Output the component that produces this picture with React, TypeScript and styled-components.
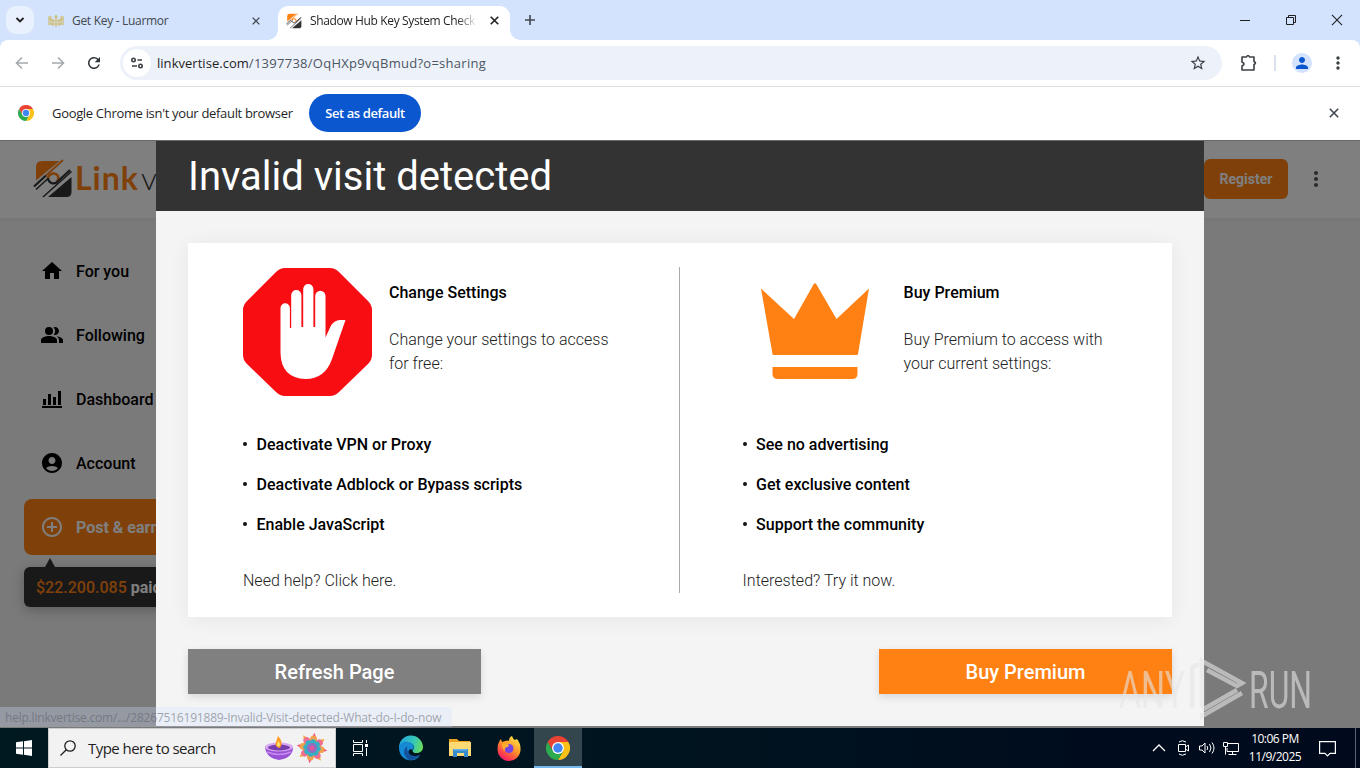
import React, { FC, ReactNode } from 'react';
import styled, { createGlobalStyle, css } from 'styled-components';
import { MdAccountCircle, MdAddCircleOutline, MdHome, MdMoreVert, MdPeopleAlt, MdPerson, MdRefresh, MdStarOutline } from 'react-icons/md';

const systemFont = "'Open Sans', 'Noto Sans', sans-serif";
const orange = '#ff8114';

const GlobalStyle = createGlobalStyle`
    * {
        box-sizing: border-box;
    }
    body {
        margin: 0;
        overflow: hidden;
        font-family: Roboto, sans-serif;
    }
    svg {
        display: block;
        flex: none;
    }
`;

const StyledDesktop = styled.div`
    position: relative;
    display: flex;
    flex-direction: column;
    width: 1360px;
    height: 768px;
    overflow: hidden;
`;

type SystemTextProps = { $size?: number; $spacing?: number; $weight?: number; $color?: string };

const SystemText = styled.span<SystemTextProps>`
    font-family: ${systemFont};
    font-size: ${(props) => props.$size || 12}px;
    font-weight: ${(props) => props.$weight || 400};
    letter-spacing: ${(props) => props.$spacing || 0}px;
    color: ${(props) => props.$color || '#1f1f1f'};
    white-space: nowrap;
`;

const Spacer = styled.span<{ $width: number }>`
    flex: none;
    width: ${(props) => props.$width}px;
`;

/* Tab strip */

const StyledTabStrip = styled.div`
    display: flex;
    height: 40px;
    background: #d3e2fd;
`;

const StyledTabSearch = styled.div`
    display: flex;
    align-items: center;
    justify-content: center;
    width: 28px;
    height: 28px;
    margin: 6px 6px 0;
    border-radius: 10px;
    background: #e9f0fe;
`;

const StyledTab = styled.div<{ $active?: boolean; $width: number }>`
    position: relative;
    display: flex;
    align-items: center;
    width: ${(props) => props.$width}px;
    height: 34px;
    margin-top: 6px;
    padding: 0 8px 5px;
    ${(props) =>
        props.$active &&
        css`
            background: #fff;
            border-radius: 10px 10px 0 0;
            &::before,
            &::after {
                content: '';
                position: absolute;
                bottom: 0;
                width: 10px;
                height: 10px;
            }
            &::before {
                left: -10px;
                background: radial-gradient(circle at 0 0, transparent 9.5px, #fff 10px);
            }
            &::after {
                right: -10px;
                background: radial-gradient(circle at 100% 0, transparent 9.5px, #fff 10px);
            }
        `}
`;

const StyledTabTitle = styled.div<{ $faded?: boolean }>`
    flex: 1;
    margin-left: 8px;
    margin-right: 11px;
    line-height: 18px;
    display: flex;
    ${(props) => props.$faded && 'mask-image: linear-gradient(90deg, #000 87%, transparent 99%);'}
`;

const StyledNewTab = styled.div`
    margin: 14px 0 0 14px;
`;

const StyledWindowButtons = styled.div`
    display: flex;
    gap: 34px;
    margin: 14px 17px 0 auto;
`;

/* Toolbar */

const StyledToolbarBack = styled.div`
    background: #d3e2fd;
`;

const StyledToolbar = styled.div`
    display: flex;
    align-items: center;
    height: 47px;
    padding: 0 12px 1px 14px;
    border-bottom: 1px solid #dde1e6;
    border-radius: 8px 8px 0 0;
    background: #fff;
`;

const StyledNavButtons = styled.div`
    display: flex;
    flex: none;
    gap: 20px;
    width: 106px;
`;

const StyledOmnibox = styled.div`
    display: flex;
    flex: none;
    align-items: center;
    width: 1102px;
    height: 34px;
    padding: 0 15px 0 3px;
    border-radius: 17px;
    background: #edf1fa;
`;

const StyledSiteInfo = styled.div`
    display: flex;
    align-items: center;
    justify-content: center;
    width: 28px;
    height: 28px;
    margin-right: 6px;
    border-radius: 50%;
    background: #fff;
`;

const StyledUrl = styled.div`
    flex: 1;
    line-height: 20px;
`;

const StyledToolbarSeparator = styled.div`
    width: 2px;
    height: 16px;
    margin: 0 16px 0 16px;
    background: #dbe1ec;
`;

const StyledAvatar = styled.div`
    display: flex;
    flex: none;
    align-items: center;
    justify-content: center;
    width: 20px;
    height: 20px;
    margin-right: 16px;
    border-radius: 50%;
    background: #d3e2fd;
    color: #0b57d0;
`;

/* Info bar */

const StyledInfoBar = styled.div`
    display: flex;
    align-items: center;
    height: 53px;
    padding: 0 21px 2px 18px;
    background: #fff;
`;

const StyledInfoText = styled.div`
    display: flex;
    width: 257px;
    margin-left: 18px;
`;

const StyledDefaultButton = styled.div`
    display: flex;
    align-items: center;
    justify-content: center;
    width: 112px;
    height: 38px;
    margin-right: auto;
    border-radius: 19px;
    background: #0b57d0;
`;

/* Page below the dialog */

const StyledPage = styled.div`
    position: relative;
    height: 588px;
    overflow: hidden;
    background: #f4f4f4;
`;

const StyledPageHeader = styled.div`
    display: flex;
    align-items: center;
    height: 78px;
    padding: 0 32px 2px 33px;
    border-top: 1px solid #cfcfcf;
    background: #fff;
    box-shadow: 0 1px 4px rgba(0, 0, 0, 0.06);
`;

const StyledBrand = styled.div`
    display: flex;
    align-items: center;
    margin-left: 2px;
    padding-bottom: 2px;
    font-family: 'Lato', sans-serif;
    font-size: 32px;
    font-weight: 700;
    letter-spacing: 1px;
    color: ${orange};
`;

const StyledBrandThin = styled.span`
    margin-left: 2px;
    font-weight: 300;
    color: #333;
`;

const StyledRegister = styled.div`
    display: flex;
    align-items: center;
    justify-content: center;
    width: 84px;
    height: 40px;
    margin-left: auto;
    margin-right: 16px;
    border-radius: 6px;
    background: ${orange};
    color: #fff;
    font-size: 14px;
    font-weight: 700;
`;

const StyledSidebar = styled.div`
    display: flex;
    flex-direction: column;
    width: 248px;
    padding: 21px 24px 0;
`;

const StyledMenuItem = styled.div<{ $primary?: boolean }>`
    display: flex;
    align-items: center;
    gap: 12px;
    height: ${(props) => (props.$primary ? 56 : 64)}px;
    margin-top: ${(props) => (props.$primary ? 4 : 0)}px;
    padding-left: 16px;
    border-radius: 8px;
    background: ${(props) => (props.$primary ? orange : 'none')};
    color: ${(props) => (props.$primary ? '#fff' : '#000')};
    font-size: 16px;
    font-weight: ${(props) => (props.$primary ? 700 : 500)};
    white-space: nowrap;
`;

const StyledPaidArrow = styled.div`
    width: 0;
    margin: 3px 0 0 21px;
    border: 5.5px solid transparent;
    border-top: none;
    border-bottom: 9px solid #333;
`;

const StyledPaid = styled.div`
    height: 40px;
    padding-left: 12px;
    border-radius: 6px;
    background: #333;
    box-shadow: 0 3px 12px rgba(0, 0, 0, 0.25);
    color: #fff;
    font-size: 16px;
    font-weight: 700;
    line-height: 41px;
    white-space: nowrap;
`;

const StyledPaidAmount = styled.span`
    color: ${orange};
    font-weight: 500;
`;

/* Dialog */

const StyledOverlay = styled.div`
    position: absolute;
    inset: 0;
    display: flex;
    justify-content: center;
    padding: 1px 0 2px;
    background: rgba(0, 0, 0, 0.5);
`;

const StyledDialog = styled.div`
    display: flex;
    flex-direction: column;
    width: 1048px;
    background: #f4f4f4;
`;

const StyledDialogTitle = styled.div`
    height: 70px;
    padding-left: 32px;
    background: #333;
    color: #fff;
    font-size: 40px;
    line-height: 72px;
`;

const StyledCard = styled.div`
    display: flex;
    height: 374px;
    margin: 32px 32px 0;
    padding: 24px 0;
    background: #fff;
    box-shadow: 0 2px 20px rgba(0, 0, 0, 0.06);
`;

const StyledOption = styled.div<{ $left: number; $width?: number }>`
    width: ${(props) => (props.$width ? `${props.$width}px` : 'auto')};
    padding-left: ${(props) => props.$left}px;
`;

const StyledCardDivider = styled.div`
    width: 1px;
    background: #aaa;
`;

const StyledOptionTop = styled.div<{ $gap: number }>`
    display: flex;
    gap: ${(props) => props.$gap}px;
    height: 157px;
`;

const StyledOptionHeading = styled.div`
    margin-top: 14px;
    font-size: 16px;
    font-weight: 500;
    line-height: 24px;
    color: #000;
`;

const StyledOptionText = styled.div`
    margin-top: 23px;
    font-size: 16px;
    font-weight: 300;
    line-height: 24px;
    color: #222;
    white-space: pre;
`;

const StyledBullets = styled.ul`
    margin: 0;
    padding: 0;
    list-style: none;
`;

const StyledBullet = styled.li`
    display: flex;
    align-items: center;
    gap: 9.5px;
    height: 40px;
    font-size: 16px;
    font-weight: 500;
    color: #000;
    &::before {
        content: '';
        width: 4px;
        height: 4px;
        border-radius: 50%;
        background: #111;
    }
`;

const StyledOptionLink = styled.div`
    margin-top: 25px;
    font-size: 16px;
    font-weight: 300;
    line-height: 24px;
    color: #222;
`;

const StyledActions = styled.div`
    display: flex;
    justify-content: space-between;
    padding: 32px 32px 0;
`;

const StyledAction = styled.div<{ $color: string }>`
    width: 293px;
    height: 45px;
    background: ${(props) => props.$color};
    box-shadow: 0 3px 8px rgba(0, 0, 0, 0.12);
    color: #fff;
    font-size: 20px;
    font-weight: 500;
    line-height: 47px;
    text-align: center;
`;

const StyledStatus = styled.div`
    position: absolute;
    left: 0;
    bottom: 1px;
    display: flex;
    align-items: center;
    width: 452px;
    height: 20px;
    padding-left: 5px;
    border-radius: 0 4px 0 0;
    background: rgba(211, 226, 253, 0.3);
`;

const StyledWatermark = styled.svg`
    position: absolute;
    left: 1110px;
    top: 650px;
`;

/* Taskbar */

const StyledTaskbar = styled.div`
    display: flex;
    height: 40px;
    background: linear-gradient(90deg, #001820, #00141f 50%, #000c1e 80%, #000a1c);
`;

const StyledTaskButton = styled.div<{ $active?: boolean; $width?: number }>`
    display: flex;
    align-items: center;
    justify-content: center;
    width: ${(props) => props.$width || 49}px;
    height: 40px;
    ${(props) => props.$active && 'background: #33454d; border-bottom: 2px solid #76b9ed; padding-top: 2px;'}
`;

const StyledSearch = styled.div`
    display: flex;
    align-items: center;
    width: 288px;
    height: 40px;
    padding: 0 7px 0 11px;
    border: 1px solid #cdcdcd;
    background: #f2f2f2;
`;

const StyledSearchText = styled.div`
    flex: 1;
    margin-left: 12px;
`;

const StyledTray = styled.div`
    display: flex;
    align-items: center;
    margin-left: auto;
`;

const StyledClock = styled.div`
    display: flex;
    flex-direction: column;
    align-items: center;
    width: 64px;
    line-height: 18px;
`;

const StyledShowDesktop = styled.div`
    width: 5px;
    height: 40px;
    margin-left: 19px;
    border-left: 1px solid #5b6473;
`;

type IconProps = { width: number; height: number; box?: string; stroke?: string; weight?: number; children: ReactNode };

const LineIcon: FC<IconProps> = (props) => (
    <svg
        width={props.width}
        height={props.height}
        viewBox={props.box || `0 0 ${props.width} ${props.height}`}
        fill="none"
        stroke={props.stroke || '#1f1f1f'}
        strokeWidth={props.weight || 1}
    >
        {props.children}
    </svg>
);

const CloseIcon: FC<{ size: number; color?: string; weight?: number }> = (props) => (
    <LineIcon width={props.size} height={props.size} box="0 0 10 10" stroke={props.color} weight={props.weight || 1.6}>
        <path d="M.8.8l8.4 8.4M9.2.8L.8 9.2" />
    </LineIcon>
);

const ChromeLogo: FC<{ size: number }> = (props) => (
    <svg width={props.size} height={props.size} viewBox="0 0 48 48">
        <path d="M24 12h20.8A24 24 0 0 0 3.2 12l10.4 18z" fill="#ea4335" />
        <path d="M34.4 30L24 48A24 24 0 0 0 44.8 12H24z" fill="#fbc116" />
        <path d="M13.6 30L3.2 12A24 24 0 0 0 24 48l10.4-18z" fill="#2da94f" />
        <circle cx="24" cy="24" r="12" fill="#fff" />
        <circle cx="24" cy="24" r="9.5" fill="#4285f4" />
    </svg>
);

const LinkvertiseLogo: FC<{ size: number }> = (props) => (
    <svg width={props.size} height={props.size} viewBox="0 0 38 40">
        <path d="M2 21.500V8q0-6 6-6h17.500z" fill={orange} />
        <path d="M37.500 18v15q0 5-5 5H14z" fill="#333" />
        <path d="M0 27.500L12 16.500" stroke="#333" strokeWidth="2.200" />
        <path d="M12 16.500L29 1" stroke={orange} strokeWidth="1.800" />
        <path d="M2 30.500L14 19.500M9 38L37.500 12.500" stroke="#333" strokeWidth="1.600" />
        <path d="M14 19a5.500 5.500 0 0 1 10-2q1 3-1 5.500" fill="none" stroke={orange} strokeWidth="2.600" />
        <path d="M14 19a5.500 5.500 0 0 0 8.500 4.500L36 11" fill="none" stroke="#333" strokeWidth="2.200" />
    </svg>
);

const LuarmorIcon: FC = () => (
    <svg width="16" height="16" viewBox="0 0 16 16" fill="none" stroke="#cfbe72">
        <path d="M1 3v9M3 3v9M5 6v7M8 2v12M11 6v7M13 3v9M15 3v9" strokeWidth="1.200" />
        <path d="M1 5.5l4 2M15 5.5l-4 2M5 8h6M2 11h12" strokeWidth="1.200" />
        <circle cx="8" cy="4" r="1.200" />
    </svg>
);

const StopHand: FC = () => (
    <svg width="129" height="129" viewBox="0 0 129 129">
        <path
            d="M42 0H87Q92 0 96 4L125 33Q129 37 129 42V87Q129 92 125 96L96 124Q92 128 87 128H42Q37 128 33 124L4 96Q0 92 0 87V42Q0 37 4 33L33 4Q37 0 42 0Z"
            fill="#f70d12"
        />
        <path
            d="M37.500 85V40a4.700 4.700 0 0 1 9.400 0V60h1.300V27a5 5 0 0 1 10.200 0V59h1.800V21a5 5 0 0 1 10.200 0V59h1.800V28a5 5 0 0 1 10.300 0V69.500l5-11Q91 52 97 52h5.500L89 91Q82 111 62.500 111 38 110 37.500 85Z"
            fill="#fff"
        />
    </svg>
);

const Crown: FC = () => (
    <svg width="108" height="98" viewBox="0 0 108 98" fill={orange}>
        <path d="M0 5.500L33 36 52.500 1.500Q54-1 55.500 1.500L75.500 36 108 5.500 97 71Q96.800 72 96 72H12.500Q11.700 72 11.500 71z" />
        <path d="M11.500 84H96.500V91Q96.500 96 91 96H17Q11.500 96 11.500 91z" />
    </svg>
);

const BarChartIcon: FC = () => (
    <svg width="24" height="24" viewBox="0 0 24 24">
        <path d="M2 19h20v2H2zM3 12h3v6H3zM8 7h3v11H8zM13 10h3v8h-3zM18 4h3v14h-3z" />
    </svg>
);

const EdgeLogo: FC = () => (
    <svg width="26" height="26" viewBox="0 0 26 26">
        <defs>
            <linearGradient id="edgeTop" x1="0" y1="0.4" x2="1" y2="0.6">
                <stop offset="0" stopColor="#22a6dc" />
                <stop offset="0.6" stopColor="#36c8b5" />
                <stop offset="1" stopColor="#6bdc58" />
            </linearGradient>
        </defs>
        <path d="M1 13A12 12 0 0 1 25 12c0 4-3 6-7 6-3 0-4-2-3-3 3-4-1-7-5-7-5 0-8 3-9 5z" fill="url(#edgeTop)" />
        <path d="M1 13c0-4 4-7 9-6 5 0 7 5 5 8-2-2-6 0-4 4 2 3 8 3 11 1-3 5-8 6-12 5C5 24 1 19 1 13z" fill="#1689d4" />
        <path d="M9 11c-5 4-3 11 2 14 5 0 9-2 11-5-5 2-10 1-12-3-1-2-1-4-1-6z" fill="#12539b" />
    </svg>
);

const ExplorerLogo: FC = () => (
    <svg width="22" height="20" viewBox="0 0 22 20">
        <path d="M0 1h8l2 2h11v5H0z" fill="#e7a321" />
        <path d="M0 4h22v14H0z" fill="#ffd973" />
        <path d="M4 11h15v8h-4v-4H8v4H4z" fill="#398ccd" />
        <path d="M5 11h13v1.500H5z" fill="#61b5e8" />
    </svg>
);

const FirefoxLogo: FC = () => (
    <svg width="24" height="25" viewBox="0 0 24 25">
        <defs>
            <linearGradient id="foxFire" x1="0.8" y1="0" x2="0.2" y2="1">
                <stop offset="0" stopColor="#ffe64a" />
                <stop offset="0.45" stopColor="#ff9528" />
                <stop offset="0.8" stopColor="#ff394f" />
                <stop offset="1" stopColor="#e71580" />
            </linearGradient>
        </defs>
        <path d="M4 3l1 3 3-1q3-1 4 0 0-4 3-5 1 3 3 4l2-1q4 5 3.500 11A11.500 11.500 0 0 1 .5 13Q.5 7 4 3z" fill="url(#foxFire)" />
        <circle cx="12" cy="12.500" r="4.500" fill="#7542e5" />
        <path d="M5 8q4-2 7 1l-1 2q-4 0-3 4-3-2-3-7z" fill="#ffad2c" />
    </svg>
);

const DiyaIcon: FC = () => (
    <svg width="30" height="26" viewBox="0 0 30 26">
        <path d="M1 12q14 6 28 0 0 11-14 13Q2 23 1 12z" fill="#9852d6" />
        <ellipse cx="15" cy="12" rx="14" ry="4.500" fill="#d9a8f2" />
        <ellipse cx="15" cy="12.500" rx="11" ry="3" fill="#783cad" />
        <path d="M14 1q6 6 2 12-6-1-4-6z" fill="#ff9b22" />
        <path d="M14.500 6q3 4 0 6-3-2 0-6z" fill="#ffe36a" />
        <path d="M3 17q12 5 24 0" fill="none" stroke="#c88af0" strokeWidth="1.500" />
    </svg>
);

const petals = [0, 45, 90, 135, 180, 225, 270, 315];

const RangoliIcon: FC = () => (
    <svg width="32" height="32" viewBox="-16 -16 32 32">
        {petals.map((angle, index) => (
            <g key={angle} transform={`rotate(${angle + 10})`}>
                <path d="M-4-7L0-15.500 4-7z" fill={index % 2 ? '#f6a83c' : '#ee5f7f'} />
                <circle cy="-9" r="3.400" fill={index % 2 ? '#ef6e91' : '#f4a14b'} />
            </g>
        ))}
        {petals.map((angle) => (
            <circle key={angle} cy="-6" r="2.800" fill="#35aec2" transform={`rotate(${angle + 10})`} />
        ))}
        <circle r="5" fill="#8c6fc4" />
        <circle r="2.500" fill="#e0559a" />
    </svg>
);

const Browser: FC = () => (
    <>
        <StyledTabStrip>
            <StyledTabSearch>
                <LineIcon width={10} height={8} weight={1.8}>
                    <path d="M1.500 2L5 5.500 8.500 2" />
                </LineIcon>
            </StyledTabSearch>
            <StyledTab $width={238}>
                <LuarmorIcon />
                <StyledTabTitle>
                    <SystemText $color="#41484f" $spacing={-0.3}>
                        Get Key - Luarmor
                    </SystemText>
                </StyledTabTitle>
                <CloseIcon size={8} color="#41484f" />
                <Spacer $width={10} />
            </StyledTab>
            <StyledTab $width={232} $active>
                <LinkvertiseLogo size={16} />
                <StyledTabTitle $faded>
                    <SystemText $spacing={-0.36}>Shadow Hub Key System Check</SystemText>
                </StyledTabTitle>
                <CloseIcon size={9} weight={1.8} />
                <Spacer $width={3} />
            </StyledTab>
            <StyledNewTab>
                <LineIcon width={12} height={12} weight={1.6} stroke="#41484f">
                    <path d="M6 1v10M1 6h10" />
                </LineIcon>
            </StyledNewTab>
            <StyledWindowButtons>
                <LineIcon width={12} height={12}>
                    <path d="M1 6.500h10" />
                </LineIcon>
                <LineIcon width={12} height={12}>
                    <path d="M1.500 3.500h7v7h-7zM3.500 3.500v-2h7v7h-2" />
                </LineIcon>
                <CloseIcon size={12} weight={0.9} />
            </StyledWindowButtons>
        </StyledTabStrip>
        <StyledToolbarBack>
            <StyledToolbar>
                <StyledNavButtons>
                    <LineIcon width={16} height={16} stroke="#a5a9ad" weight={1.6}>
                        <path d="M14 8H3M8 2.500L2.500 8 8 13.500" />
                    </LineIcon>
                    <LineIcon width={16} height={16} stroke="#a5a9ad" weight={1.6}>
                        <path d="M2 8h11M8 2.500L13.500 8 8 13.500" />
                    </LineIcon>
                    <MdRefresh size={18} color="#30353a" style={{ margin: -1 }} />
                </StyledNavButtons>
                <StyledOmnibox>
                    <StyledSiteInfo>
                        <LineIcon width={14} height={12} stroke="#3c4043" weight={1.6}>
                            <circle cx="3.500" cy="3" r="1.700" />
                            <path d="M7.500 3H12M2 9h5" />
                            <circle cx="10.500" cy="9" r="1.700" />
                        </LineIcon>
                    </StyledSiteInfo>
                    <StyledUrl>
                        <SystemText $size={13} $spacing={0.03}>
                            linkvertise.com
                        </SystemText>
                        <SystemText $size={13} $spacing={0.27} $color="#4c5663">
                            /1397738/OqHXp9vqBmud?o=sharing
                        </SystemText>
                    </StyledUrl>
                    <MdStarOutline size={18} color="#3c4043" />
                </StyledOmnibox>
                <Spacer $width={18} />
                <LineIcon width={18} height={18} stroke="#3c4043" weight={1.6}>
                    <path d="M2 3h4.500Q8 0 9.500 3H14v4.500q3 1.500 0 3V16H2v-4q4-2 0-4z" strokeLinejoin="round" />
                </LineIcon>
                <StyledToolbarSeparator />
                <StyledAvatar>
                    <MdPerson size={18} />
                </StyledAvatar>
                <MdMoreVert size={20} color="#3c4043" />
            </StyledToolbar>
        </StyledToolbarBack>
        <StyledInfoBar>
            <ChromeLogo size={16} />
            <StyledInfoText>
                <SystemText $size={13} $spacing={-0.32}>
                    Google Chrome isn't your default browser
                </SystemText>
            </StyledInfoText>
            <StyledDefaultButton>
                <SystemText $size={13} $weight={600} $spacing={-0.4} $color="#fff">
                    Set as default
                </SystemText>
            </StyledDefaultButton>
            <CloseIcon size={10} color="#41484f" />
        </StyledInfoBar>
    </>
);

type OptionProps = {
    left: number;
    width?: number;
    picture: ReactNode;
    gap: number;
    heading: string;
    text: string;
    bullets: string[];
    link: string;
};

const Option: FC<OptionProps> = (props) => (
    <StyledOption $left={props.left} $width={props.width}>
        <StyledOptionTop $gap={props.gap}>
            {props.picture}
            <div>
                <StyledOptionHeading>{props.heading}</StyledOptionHeading>
                <StyledOptionText>{props.text}</StyledOptionText>
            </div>
        </StyledOptionTop>
        <StyledBullets>
            {props.bullets.map((bullet) => (
                <StyledBullet key={bullet}>{bullet}</StyledBullet>
            ))}
        </StyledBullets>
        <StyledOptionLink>{props.link}</StyledOptionLink>
    </StyledOption>
);

const StyledHandBox = styled.div`
    padding-top: 1px;
`;

const StyledCrownBox = styled.div`
    padding: 16px 0 0 18px;
`;

const Dialog: FC = () => (
    <StyledDialog>
        <StyledDialogTitle>Invalid visit detected</StyledDialogTitle>
        <StyledCard>
            <Option
                left={55}
                width={491}
                picture={
                    <StyledHandBox>
                        <StopHand />
                    </StyledHandBox>
                }
                gap={17}
                heading="Change Settings"
                text={'Change your settings to access\nfor free:'}
                bullets={['Deactivate VPN or Proxy', 'Deactivate Adblock or Bypass scripts', 'Enable JavaScript']}
                link="Need help? Click here."
            />
            <StyledCardDivider />
            <Option
                left={62.6}
                picture={
                    <StyledCrownBox>
                        <Crown />
                    </StyledCrownBox>
                }
                gap={35}
                heading="Buy Premium"
                text={'Buy Premium to access with\nyour current settings:'}
                bullets={['See no advertising', 'Get exclusive content', 'Support the community']}
                link="Interested? Try it now."
            />
        </StyledCard>
        <StyledActions>
            <StyledAction $color="#808080">Refresh Page</StyledAction>
            <StyledAction $color={orange}>Buy Premium</StyledAction>
        </StyledActions>
    </StyledDialog>
);

const Page: FC = () => (
    <StyledPage>
        <StyledPageHeader>
            <LinkvertiseLogo size={40} />
            <StyledBrand>
                Link<StyledBrandThin>v</StyledBrandThin>
            </StyledBrand>
            <StyledRegister>Register</StyledRegister>
            <MdMoreVert size={24} color="#555" />
        </StyledPageHeader>
        <StyledSidebar>
            <StyledMenuItem>
                <MdHome size={24} />
                For you
            </StyledMenuItem>
            <StyledMenuItem>
                <MdPeopleAlt size={24} />
                Following
            </StyledMenuItem>
            <StyledMenuItem>
                <BarChartIcon />
                Dashboard
            </StyledMenuItem>
            <StyledMenuItem>
                <MdAccountCircle size={24} />
                Account
            </StyledMenuItem>
            <StyledMenuItem $primary>
                <MdAddCircleOutline size={24} />
                Post &amp; earn
            </StyledMenuItem>
            <StyledPaidArrow />
            <StyledPaid>
                <StyledPaidAmount>$22.200.085</StyledPaidAmount> paid
            </StyledPaid>
        </StyledSidebar>
        <StyledOverlay>
            <Dialog />
        </StyledOverlay>
        <StyledStatus>
            <SystemText $size={12} $spacing={-0.2} $color="rgba(80, 88, 100, 0.5)">
                help.linkvertise.com/.../28267516191889-Invalid-Visit-detected-What-do-I-do-now
            </SystemText>
        </StyledStatus>
    </StyledPage>
);

const Taskbar: FC = () => (
    <StyledTaskbar>
        <StyledTaskButton $width={48}>
            <svg width="16" height="16" viewBox="0 0 16 16" fill="#fff">
                <path d="M0 2.300L7 1.300V7.500H0zM8 1.200L16 0V7.500H8zM0 8.500H7V14.700L0 13.700zM8 8.500H16V16L8 14.800z" />
            </svg>
        </StyledTaskButton>
        <StyledSearch>
            <LineIcon width={16} height={16} weight={1.3}>
                <circle cx="10" cy="6" r="5.200" />
                <path d="M6.300 9.700L.5 15.500" />
            </LineIcon>
            <StyledSearchText>
                <SystemText $size={15} $spacing={-0.55}>
                    Type here to search
                </SystemText>
            </StyledSearchText>
            <DiyaIcon />
            <Spacer $width={2} />
            <RangoliIcon />
        </StyledSearch>
        <StyledTaskButton>
            <LineIcon width={17} height={16} stroke="#fff">
                <path d="M1.500 0v2.500h9V0M1.500 4.500h9v7h-9zM1.500 16v-2.500h9V16M14.500 0v3M14.500 8v8" />
                <path d="M13 4h3v3h-3z" fill="#fff" stroke="none" />
            </LineIcon>
        </StyledTaskButton>
        <StyledTaskButton $width={51}>
            <EdgeLogo />
        </StyledTaskButton>
        <StyledTaskButton $width={48}>
            <ExplorerLogo />
        </StyledTaskButton>
        <StyledTaskButton $width={50}>
            <FirefoxLogo />
        </StyledTaskButton>
        <StyledTaskButton $active $width={48}>
            <ChromeLogo size={24} />
        </StyledTaskButton>
        <StyledTray>
            <LineIcon width={24} height={16} stroke="#fff" weight={1.3}>
                <path d="M6 11l6-6 6 6" />
            </LineIcon>
            <LineIcon width={24} height={16} stroke="#fff">
                <path d="M7.500 4.500h7v7h-7zM14.500 7l3-2v6l-3-2M8 2q3-2.500 7 0M8 14q3 2.500 7 0" />
            </LineIcon>
            <LineIcon width={24} height={16} stroke="#fff">
                <path d="M4.500 6H7l3-3v10l-3-3H4.500zM12 6q1.500 2 0 4M14.500 4q3 4 0 8M17 2.500q4 5.500 0 11" />
            </LineIcon>
            <LineIcon width={24} height={16} stroke="#fff">
                <path d="M9 3.500h10.500v8H8V8M13.500 11.500v3M9.500 14.500h8M4.500 2.500h4v4h-4zM6.500 6.500v8" />
            </LineIcon>
            <StyledClock>
                <SystemText $spacing={-0.5} $color="#fff">
                    10:06 PM
                </SystemText>
                <SystemText $spacing={-0.5} $color="#fff">
                    11/9/2025
                </SystemText>
            </StyledClock>
            <Spacer $width={12} />
            <LineIcon width={17} height={17} stroke="#fff" weight={1.2}>
                <path d="M.6 1.600H16.400V13.400H11L8.500 16 6 13.400H.6z" />
            </LineIcon>
            <StyledShowDesktop />
        </StyledTray>
    </StyledTaskbar>
);

const Watermark: FC = () => (
    <StyledWatermark width="210" height="76" viewBox="0 0 210 76" opacity="0.6">
        <g fill="#e6e6e6" fontFamily="Roboto, sans-serif" fontWeight="400" fontSize="52">
            <text x="9" y="58" textLength="66" lengthAdjust="spacingAndGlyphs">
                ANY
            </text>
            <text x="139" y="58" textLength="63" lengthAdjust="spacingAndGlyphs">
                RUN
            </text>
        </g>
        <g fill="none" stroke="#e6e6e6" strokeWidth="4.500">
            <path d="M89 15Q82 15 82 20V58M92 57V11L132 33 127 36 97 20M92 63V66L132 43M92 60L127 40" />
        </g>
    </StyledWatermark>
);

const App: FC = () => (
    <StyledDesktop>
        <GlobalStyle />
        <Browser />
        <Page />
        <Taskbar />
        <Watermark />
    </StyledDesktop>
);

export default App;
